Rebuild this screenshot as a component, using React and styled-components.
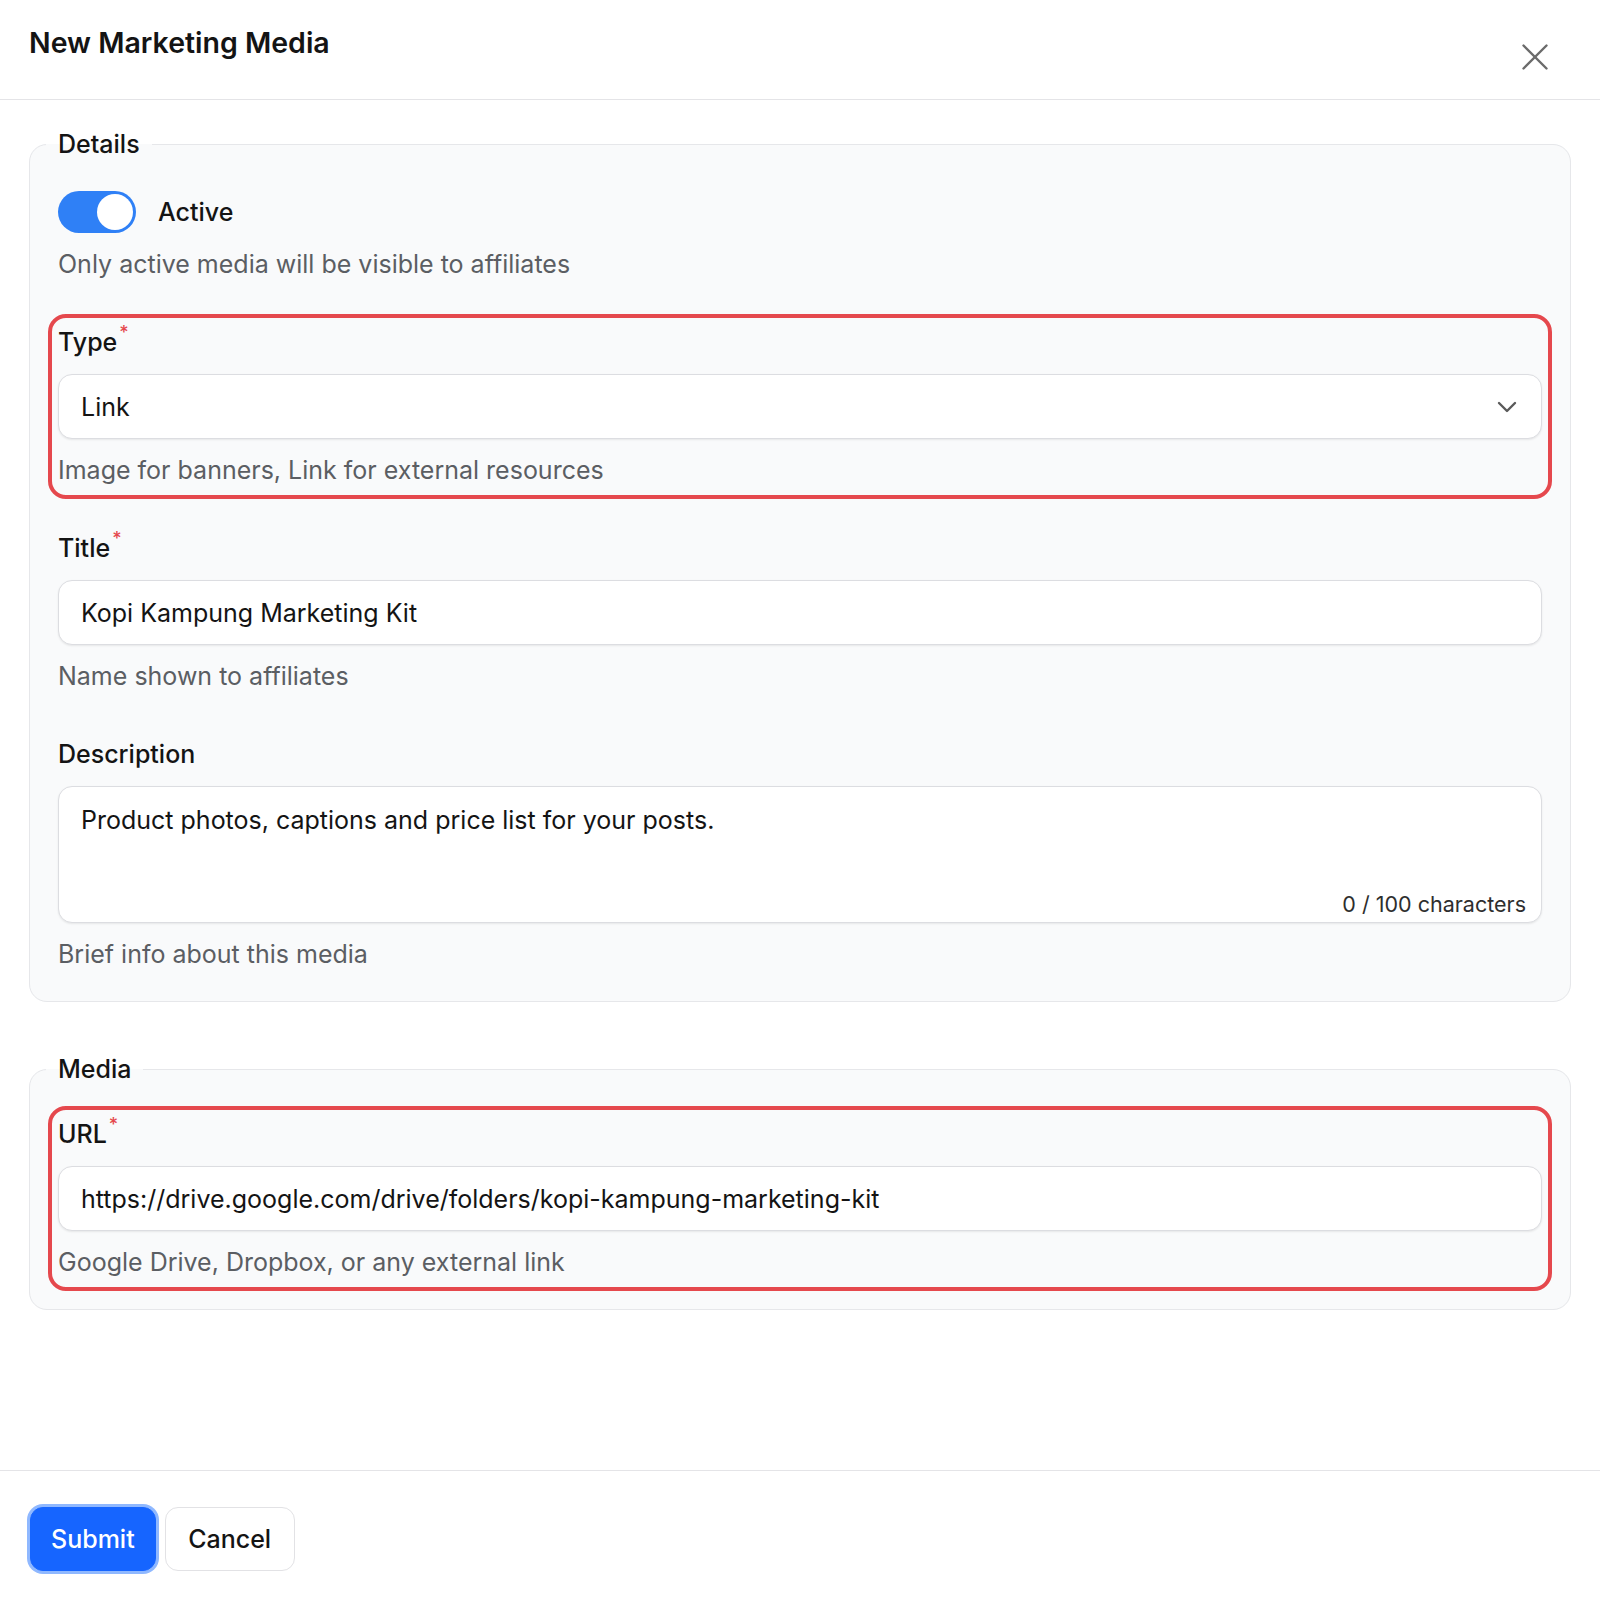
import React from 'react';
import styled, { createGlobalStyle, css } from 'styled-components';

const textColor = '#141414';
const mutedColor = '#5b5e63';
const borderColor = '#dcdde1';
const dangerColor = '#e5484d';
const primaryColor = '#1665ff';

const GlobalStyle = createGlobalStyle`
  * {
    box-sizing: border-box;
  }

  body {
    margin: 0;
    background: #ffffff;
    color: ${textColor};
    font-family: Inter, "Noto Sans", "Liberation Sans", sans-serif;
  }
`;

const Page = styled.div`
  display: flex;
  flex-direction: column;
  min-height: 100vh;
`;

const Header = styled.header`
  align-items: flex-start;
  border-bottom: 1.5px solid #e4e4e7;
  display: flex;
  height: 100px;
  justify-content: space-between;
  padding: 22px 52px 0 29px;
`;

const Title = styled.h1`
  font-size: 28.5px;
  font-weight: 600;
  line-height: 42px;
  margin: 0;
`;

const CloseButton = styled.button`
  background: none;
  border: none;
  color: #6b6b6b;
  cursor: pointer;
  display: flex;
  margin-top: 22px;
  padding: 0;
`;

const Body = styled.main`
  display: flex;
  flex: 1;
  flex-direction: column;
  gap: 49px;
  padding: 26px 29px 40px;
`;

const Section = styled.fieldset`
  background: #f9fafb;
  border: 1px solid #e6e7ea;
  border-radius: 18px;
  margin: 0;
  min-width: 0;
  padding: 28px;

  legend {
    font-size: 25px;
    font-weight: 500;
    line-height: 37px;
    margin-left: -12px;
    padding: 0 12px;
  }
`;

const Stack = styled.div`
  display: flex;
  flex-direction: column;
  gap: 41px;
`;

const Field = styled.div`
  border-radius: 8px;
  display: flex;
  flex-direction: column;
  gap: 13px;

  ${({ highlighted }) =>
    highlighted &&
    css`
      outline: 4px solid ${dangerColor};
      outline-offset: 6px;
    `}
`;

const Label = styled.label`
  font-size: 25px;
  font-weight: 500;
  line-height: 37px;

  sup {
    color: ${dangerColor};
    font-size: 18px;
    line-height: 0;
    margin-left: 2px;
    position: relative;
    top: -3px;
  }
`;

const Helper = styled.div`
  color: ${mutedColor};
  font-size: 25px;
  line-height: 37px;
`;

const ToggleRow = styled.div`
  align-items: center;
  display: flex;
  gap: 22px;
`;

const Toggle = styled.button`
  background: ${({ checked }) => (checked ? '#2f80f6' : '#d4d4d8')};
  border: none;
  border-radius: 21px;
  cursor: pointer;
  height: 42px;
  padding: 0;
  position: relative;
  width: 78px;

  &::after {
    background: #ffffff;
    border-radius: 50%;
    content: '';
    height: 36px;
    left: ${({ checked }) => (checked ? '39px' : '3px')};
    position: absolute;
    top: 3px;
    width: 36px;
  }
`;

const ToggleText = styled.span`
  font-size: 25px;
  font-weight: 500;
`;

const boxStyles = css`
  background: #ffffff;
  border: 1.5px solid ${borderColor};
  border-radius: 14px;
  box-shadow: 0 1px 2px rgba(0, 0, 0, 0.08);
  color: ${textColor};
  font-family: inherit;
  font-size: 25px;
  width: 100%;
`;

const TextInput = styled.input`
  ${boxStyles};
  height: 65px;
  outline: none;
  padding: 0 22px;
`;

const SelectBox = styled.button`
  ${boxStyles};
  align-items: center;
  cursor: pointer;
  display: flex;
  height: 65px;
  justify-content: space-between;
  padding: 0 24px 0 22px;
  text-align: left;

  svg {
    color: #5a5a5a;
  }
`;

const TextAreaBox = styled.div`
  ${boxStyles};
  display: flex;
  flex-direction: column;
  height: 137px;
  padding: 15px 15px 4px 22px;
`;

const TextArea = styled.textarea`
  background: transparent;
  border: none;
  color: ${textColor};
  flex: 1;
  font-family: inherit;
  font-size: 25px;
  line-height: 37px;
  outline: none;
  padding: 0;
  resize: none;
`;

const Counter = styled.div`
  align-self: flex-end;
  color: #2e2e2e;
  font-size: 21.5px;
  line-height: 28px;
`;

const Footer = styled.footer`
  align-items: center;
  border-top: 1.5px solid #e4e4e7;
  display: flex;
  gap: 9px;
  height: 137px;
  padding: 0 30px;
`;

const Button = styled.button`
  background: ${({ primary }) => (primary ? primaryColor : '#ffffff')};
  border: 1.5px solid ${({ primary }) => (primary ? primaryColor : '#e2e2e5')};
  border-radius: 13px;
  box-shadow: ${({ primary }) => (primary ? '0 0 0 3px #8fb8ff' : 'none')};
  color: ${({ primary }) => (primary ? '#ffffff' : textColor)};
  cursor: pointer;
  font-family: inherit;
  font-size: 25px;
  font-weight: 500;
  height: 64px;
  padding: 0 ${({ primary }) => (primary ? '20px' : '22.5px')};
`;

const CloseIcon = () => (
  <svg width="26" height="26" viewBox="0 0 26 26" fill="none" stroke="currentColor" strokeWidth="2.4" strokeLinecap="round">
    <line x1="1.5" y1="1.5" x2="24.5" y2="24.5" />
    <line x1="24.5" y1="1.5" x2="1.5" y2="24.5" />
  </svg>
);

const ChevronIcon = () => (
  <svg width="20" height="12" viewBox="0 0 20 12" fill="none" stroke="currentColor" strokeWidth="2.4" strokeLinecap="round" strokeLinejoin="round">
    <polyline points="2,2 10,10 18,2" />
  </svg>
);

const Required = () => <sup>*</sup>;

export default function App() {
  return (
    <Page>
      <GlobalStyle />
      <Header>
        <Title>New Marketing Media</Title>
        <CloseButton aria-label="Close">
          <CloseIcon />
        </CloseButton>
      </Header>

      <Body>
        <Section>
          <legend>Details</legend>
          <Stack>
            <Field>
              <ToggleRow>
                <Toggle checked aria-label="Active" />
                <ToggleText>Active</ToggleText>
              </ToggleRow>
              <Helper>Only active media will be visible to affiliates</Helper>
            </Field>

            <Field highlighted>
              <Label>
                Type
                <Required />
              </Label>
              <SelectBox>
                <span>Link</span>
                <ChevronIcon />
              </SelectBox>
              <Helper>Image for banners, Link for external resources</Helper>
            </Field>

            <Field>
              <Label>
                Title
                <Required />
              </Label>
              <TextInput readOnly value="Kopi Kampung Marketing Kit" />
              <Helper>Name shown to affiliates</Helper>
            </Field>

            <Field>
              <Label>Description</Label>
              <TextAreaBox>
                <TextArea readOnly value="Product photos, captions and price list for your posts." />
                <Counter>0 / 100 characters</Counter>
              </TextAreaBox>
              <Helper>Brief info about this media</Helper>
            </Field>
          </Stack>
        </Section>

        <Section>
          <legend>Media</legend>
          <Stack>
            <Field highlighted>
              <Label>
                URL
                <Required />
              </Label>
              <TextInput readOnly value="https://drive.google.com/drive/folders/kopi-kampung-marketing-kit" />
              <Helper>Google Drive, Dropbox, or any external link</Helper>
            </Field>
          </Stack>
        </Section>
      </Body>

      <Footer>
        <Button primary>Submit</Button>
        <Button>Cancel</Button>
      </Footer>
    </Page>
  );
}
